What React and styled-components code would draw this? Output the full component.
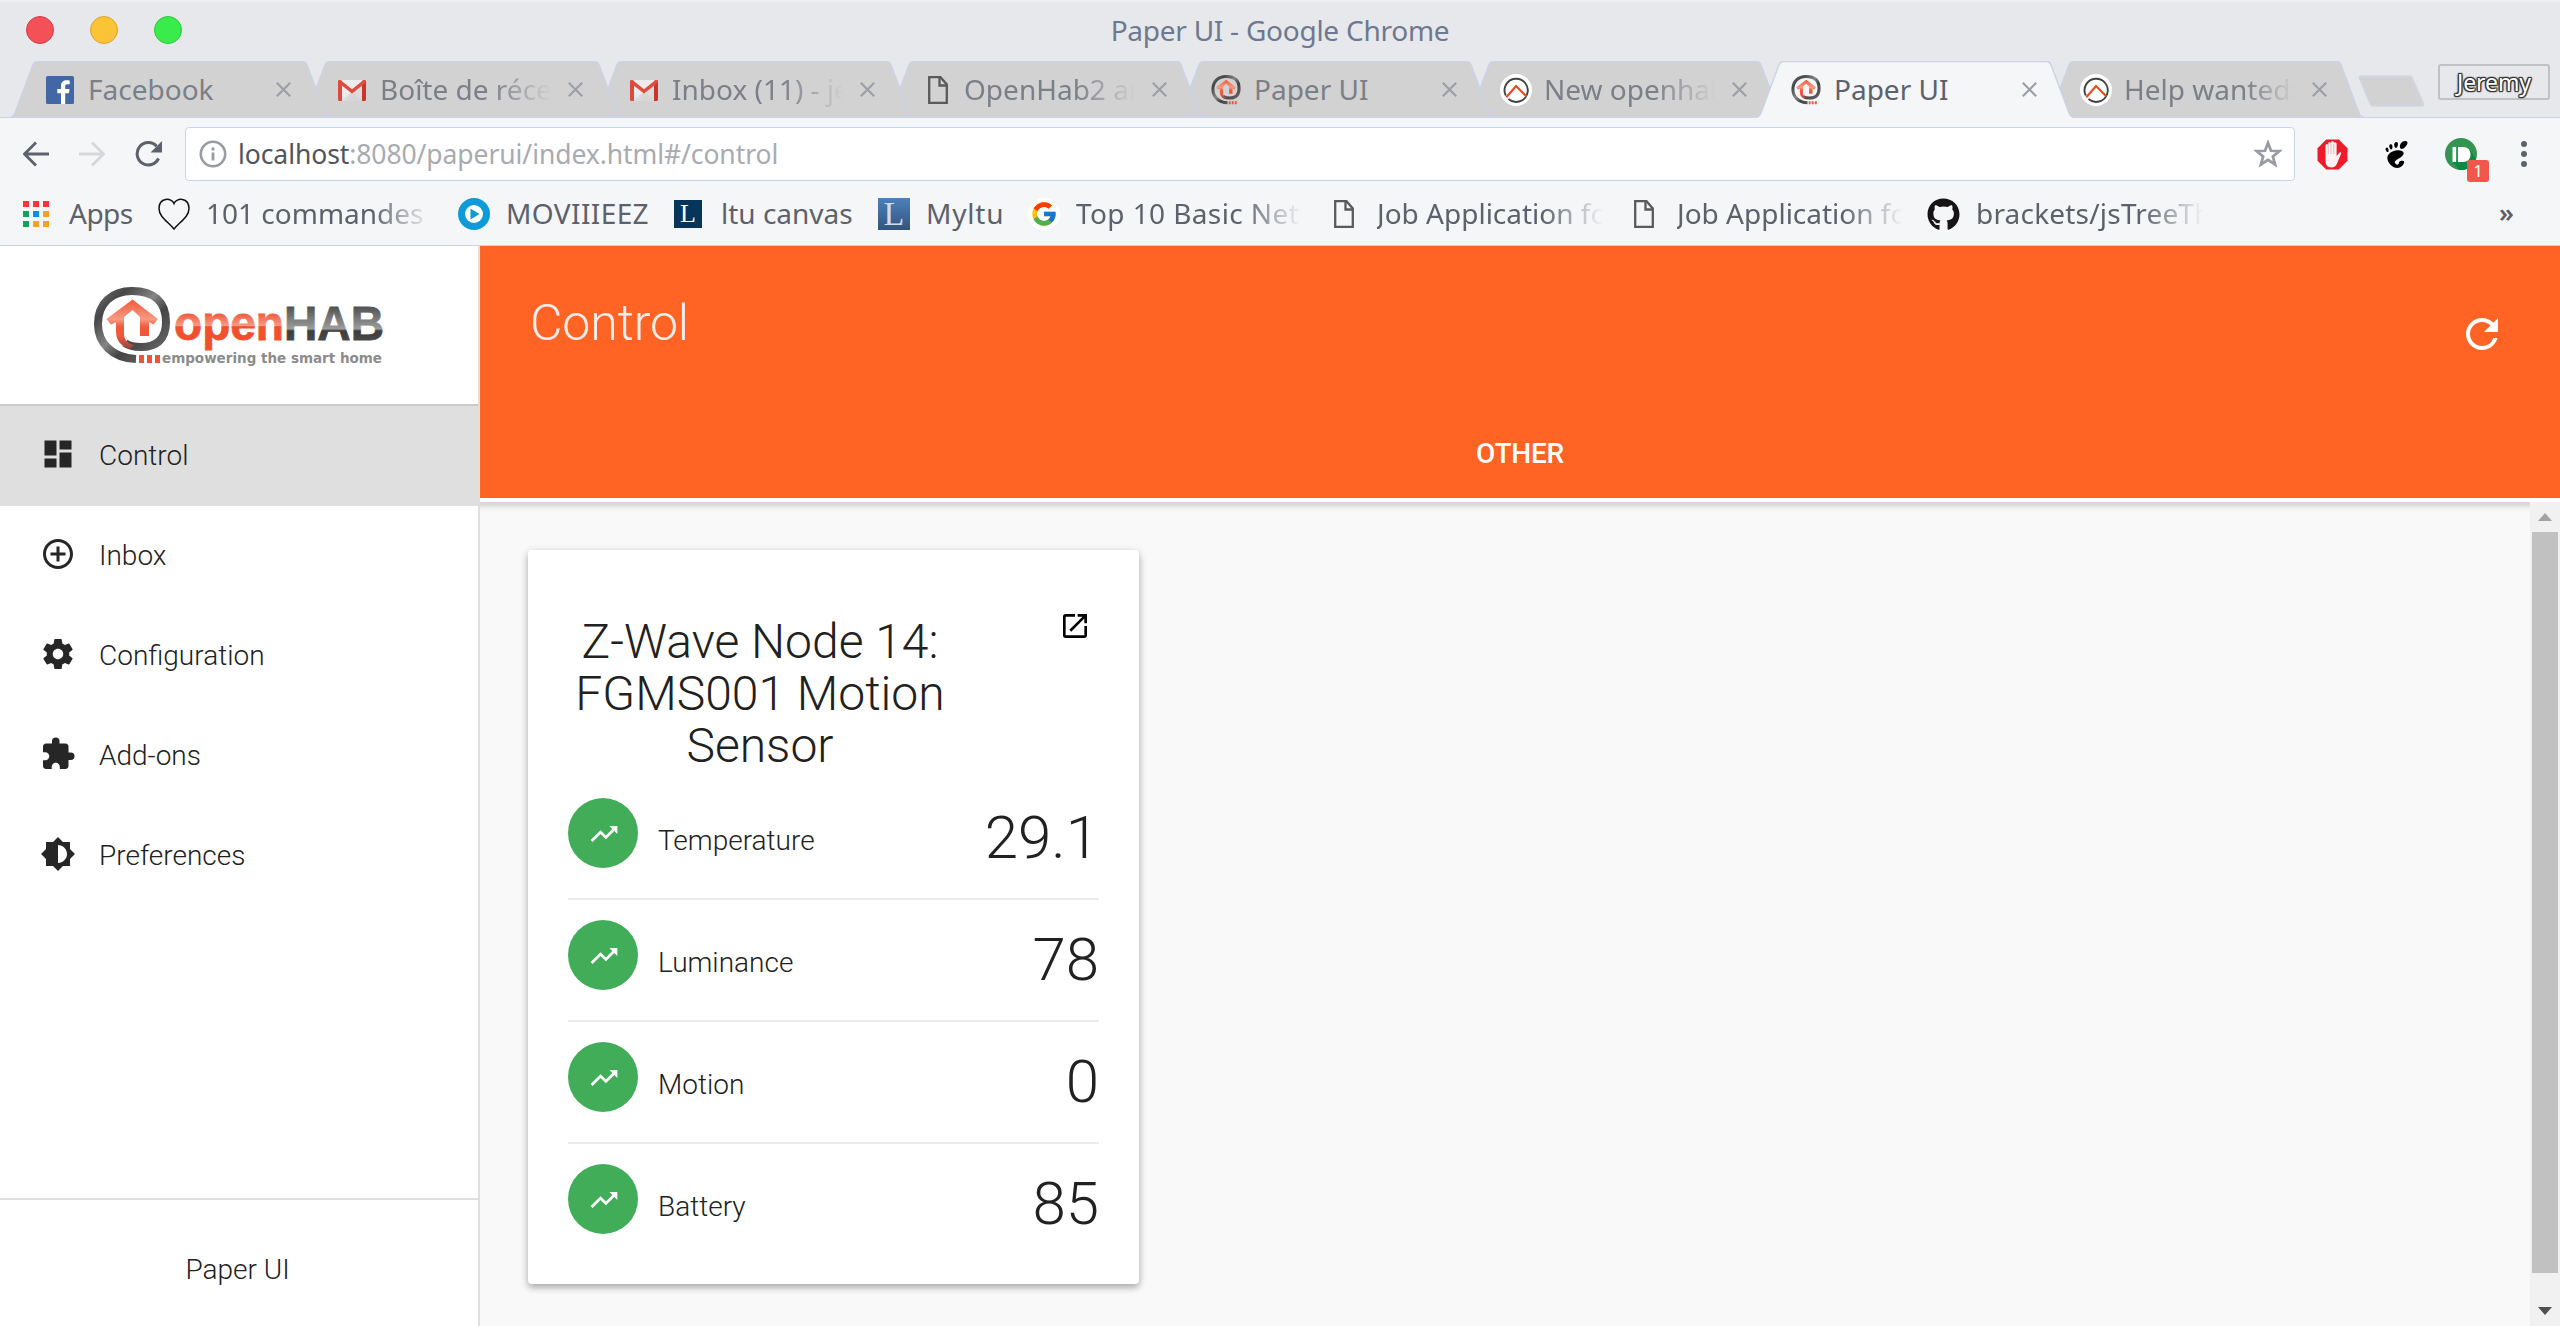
import React from "react";
import styled, { createGlobalStyle, css } from "styled-components";
import {
  MdDashboard,
  MdAddCircleOutline,
  MdExtension,
  MdBrightness6,
  MdTrendingUp,
  MdOpenInNew,
  MdRefresh,
} from "react-icons/md";
import { FaGithub } from "react-icons/fa";
import { FcGoogle } from "react-icons/fc";
import { SiGnome } from "react-icons/si";

const chromeFont = `"Noto Sans", "Open Sans", sans-serif`;
const line = "#cbd3e6";

const GlobalStyle = createGlobalStyle`
  * { box-sizing: border-box; }
  body { margin: 0; background: #fff; }
  svg { display: block; flex: none; }
`;

/* ---------- window ---------- */

const Window = styled.div`
  display: flex;
  flex-direction: column;
  width: 2560px;
  height: 1326px;
  overflow: hidden;
  background: #f5f6f8;
  font-family: ${chromeFont};
  font-size: 28px;
  color: #5c616c;
`;

const TitleBar = styled.header`
  display: grid;
  grid-template-columns: 1fr auto 1fr;
  align-items: center;
  height: 61px;
  padding: 0 26px 3px;
  border-top: 2px solid #eeeff1;
  background: #e7e8eb;
`;

const Lights = styled.div`
  display: flex;
  gap: 36px;
`;

const Light = styled.span`
  width: 28px;
  height: 28px;
  border-radius: 50%;
  border: 1px solid ${(p) => p.$edge};
  background: ${(p) => p.$fill};
`;

const WindowTitle = styled.h1`
  margin: 0 0 1px;
  font-size: 28px;
  font-weight: 400;
  line-height: 38px;
  letter-spacing: -0.25px;
  color: #6e7890;
`;

/* ---------- tabs ---------- */

const TabStrip = styled.nav`
  display: flex;
  align-items: flex-start;
  height: 57px;
  padding: 0 10px;
  background: #e7e8eb;
  box-shadow: inset 0 -1px ${line};
`;

const Tab = styled.div`
  position: relative;
  isolation: isolate;
  z-index: ${(p) => p.$z};
  display: flex;
  flex: none;
  align-items: center;
  width: ${(p) => p.$w}px;
  height: 57px;
  padding-left: 36px;
  color: ${(p) => (p.$active ? "#5c616c" : "#7b7f87")};
  & + & { margin-left: -28px; }
`;

const TabBackdrop = styled.svg`
  position: absolute;
  inset: 0;
  z-index: -1;
`;

const TabIcon = styled.span`
  display: flex;
  flex: none;
  align-items: center;
  justify-content: center;
  width: 28px;
  height: 32px;
  margin-top: 1px;
`;

const fade = css`
  mask-image: linear-gradient(to right, #000 calc(100% - ${(p) => p.$fade}px), transparent);
`;

const TabTitle = styled.span`
  width: 171px;
  margin: 0 17px 1px 14px;
  line-height: 40px;
  overflow: hidden;
  white-space: nowrap;
  ${(p) => p.$fade && fade}
`;

const NewTab = styled.span`
  width: 67px;
  height: 32px;
  margin: 14px 0 0 -6px;
`;

const Profile = styled.span`
  width: 112px;
  height: 36px;
  margin: 3px 0 0 auto;
  border: 2px solid #c0c1c4;
  border-radius: 3px;
  font-size: 23px;
  line-height: 32px;
  letter-spacing: -0.1px;
  text-align: center;
  color: #fff;
  text-shadow: 1px 0 1px #333, -1px 0 1px #333, 0 1px 1px #333, 0 -1px 1px #333,
    1px 1px 1px #333, -1px -1px 1px #333, 1px -1px 1px #333, -1px 1px 1px #333;
`;

/* ---------- toolbar ---------- */

const Toolbar = styled.div`
  display: flex;
  flex: none;
  align-items: center;
  height: 72px;
  padding-left: 23px;
`;

const NavButtons = styled.div`
  display: flex;
  gap: 30px;
  margin-right: 22px;
`;

const Omnibox = styled.div`
  display: flex;
  align-items: center;
  width: 2110px;
  height: 54px;
  padding: 0 12px 0 13px;
  border: 1px solid ${line};
  border-radius: 4px;
  background: #fff;
`;

const Url = styled.span`
  flex: 1;
  margin: 0 0 1px 11px;
  font-size: 26.5px;
  line-height: 38px;
  letter-spacing: -0.08px;
  color: #a8abb2;
`;

const Host = styled.span`
  color: #50545e;
`;

const Extensions = styled.div`
  display: flex;
  align-items: center;
  gap: 35px;
  margin-left: 22px;
`;

const BadgedIcon = styled.span`
  position: relative;
  margin-right: 9px;
`;

const Badge = styled.span`
  position: absolute;
  left: 22px;
  top: 22px;
  width: 22px;
  height: 22px;
  border-radius: 3px;
  background: #f1574b;
  font-size: 17px;
  line-height: 22px;
  text-align: center;
  color: #fff;
`;

/* ---------- bookmarks ---------- */

const BookmarkBar = styled.div`
  display: flex;
  flex: none;
  align-items: center;
  height: 56px;
  padding: 0 46px 7px 23px;
  border-bottom: 1px solid #cdd3dd;
`;

const Bookmark = styled.div`
  display: flex;
  align-items: center;
  gap: ${(p) => p.$gap}px;
  margin-left: ${(p) => p.$before}px;
`;

const BookmarkLabel = styled.span`
  width: ${(p) => p.$w}px;
  margin-bottom: 2px;
  line-height: 40px;
  letter-spacing: ${(p) => p.$track || 0}px;
  overflow: hidden;
  white-space: nowrap;
  ${(p) => p.$fade && fade}
`;

const More = styled.span`
  margin: 0 0 4px auto;
  font-size: 26px;
  font-weight: 600;
`;

/* ---------- page ---------- */

const Page = styled.div`
  display: flex;
  flex: 1;
  min-height: 0;
  font-family: Roboto, sans-serif;
  font-weight: 300;
  color: #212121;
`;

const Sidebar = styled.aside`
  display: flex;
  flex: none;
  flex-direction: column;
  width: 480px;
  border-right: 2px solid #dfdfdf;
  background: #fff;
`;

const LogoArea = styled.div`
  display: flex;
  align-items: center;
  justify-content: center;
  height: 160px;
  padding-top: 7px;
  border-bottom: 2px solid #cbcbcb;
`;

const Menu = styled.nav`
  flex: 1;
`;

const MenuItem = styled.div`
  display: flex;
  align-items: center;
  gap: 23px;
  height: 100px;
  padding: 0 0 2px 40px;
  background: ${(p) => (p.$active ? "#dfdfdf" : "transparent")};
  svg {
    margin-bottom: 2px;
    color: #262626;
  }
`;

const SidebarFooter = styled.footer`
  display: flex;
  align-items: center;
  justify-content: center;
  height: 128px;
  padding: 12px 3px 0 0;
  border-top: 2px solid #dfdfdf;
`;

const Main = styled.main`
  display: flex;
  flex: 1;
  flex-direction: column;
  min-width: 0;
`;

const Header = styled.div`
  flex: none;
  height: 256px;
  border-bottom: 4px solid #fff;
  background: #ff6424;
  color: #fff;
`;

const HeaderTop = styled.div`
  display: flex;
  justify-content: space-between;
  align-items: center;
  height: 163px;
  padding: 0 54px 0 50px;
`;

const PageTitle = styled.h2`
  margin: 0 0 10px;
  font-size: 50px;
  font-weight: 300;
  line-height: 60px;
  letter-spacing: -0.1px;
  color: #f3eeec;
`;

const RefreshButton = styled.span`
  margin-top: 13px;
`;

const HeaderTabs = styled.div`
  display: flex;
  justify-content: center;
  padding-top: 28px;
  font-weight: 500;
  line-height: 34px;
  letter-spacing: -0.2px;
`;

const Body = styled.div`
  display: flex;
  flex: 1;
  min-height: 0;
`;

const Content = styled.section`
  flex: 1;
  padding: 48px;
  background: linear-gradient(#d6d6d6, #dcdcdc 3px, #efefef 6px, #f9f9f9 10px);
`;

const Card = styled.article`
  display: flex;
  flex-direction: column;
  width: 611px;
  height: 734px;
  padding: 60px 40px 0;
  border-radius: 4px;
  background: #fff;
  box-shadow: 0 2px 10px rgba(0, 0, 0, 0.16), 0 4px 6px rgba(0, 0, 0, 0.2);
`;

const CardHeader = styled.div`
  display: flex;
  justify-content: space-between;
  height: 168px;
  padding-right: 8px;
  color: #000;
`;

const CardTitle = styled.h3`
  width: 384px;
  margin: 6px 0 0;
  font-size: 48px;
  font-weight: 300;
  line-height: 52px;
  text-align: center;
  color: #212121;
`;

const Channel = styled.div`
  display: flex;
  align-items: center;
  height: 122px;
  padding: 20px 0 30px;
  border-bottom: 2px solid #ebebeb;
  &:last-child { border-color: transparent; }
`;

const ChannelIcon = styled.span`
  display: flex;
  align-items: center;
  justify-content: center;
  width: 70px;
  height: 70px;
  padding: 2px 0 0 2px;
  border-radius: 50%;
  background: #41ad59;
  color: #fff;
`;

const ChannelName = styled.span`
  flex: 1;
  margin: 15px 0 0 20px;
  line-height: 34px;
`;

const ChannelValue = styled.span`
  margin-top: 9px;
  font-size: 60px;
  line-height: 60px;
`;

const Scrollbar = styled.div`
  display: flex;
  flex-direction: column;
  align-items: center;
  width: 30px;
  background: #f1f1f1;
`;

const Arrow = styled.span`
  width: 0;
  height: 0;
  border: 7px solid transparent;
  ${(p) =>
    p.$down
      ? "margin: 34px 0 11px; border-width: 8px 7px 0; border-top-color: #505050;"
      : "margin: 11px 0; border-width: 0 7px 8px; border-bottom-color: #a3a3a3;"}
`;

const Thumb = styled.span`
  flex: 1;
  width: 26px;
  background: #c1c1c1;
`;

/* ---------- drawings ---------- */

function MarkShapes({ id }) {
  return (
    <>
      <defs>
        <linearGradient id={`${id}-ring`} x1="0" y1="0" x2="1" y2="1">
          <stop offset="0" stopColor="#6a6a6a" />
          <stop offset="0.2" stopColor="#474747" />
          <stop offset="0.45" stopColor="#858585" />
          <stop offset="0.62" stopColor="#444" />
          <stop offset="1" stopColor="#707070" />
        </linearGradient>
        <linearGradient id={`${id}-house`} x1="0" y1="0" x2="0" y2="1">
          <stop offset="0" stopColor="#f2593a" />
          <stop offset="0.4" stopColor="#f79a82" />
          <stop offset="0.55" stopColor="#f2593a" />
          <stop offset="0.75" stopColor="#f0563a" />
          <stop offset="1" stopColor="#8a4a40" />
        </linearGradient>
      </defs>
      <path
        d="M42 72C18 71 4 56 4 37C4 16 18 4 38 4C60 4 72 15 72 35C72 53 62 60 47 60C39 60 35 59 31 56"
        fill="none"
        stroke={`url(#${id}-ring)`}
        strokeWidth="8"
      />
      <path
        d="M38.500 12.500L64 32L59.500 37.500L55 35V49H46V30L38.500 23L30 30V46C30 53 33 56 40 58L36 62C26 59 22 53 22 44V35L17 37.500L12.500 32Z"
        fill={`url(#${id}-house)`}
      />
      <path d="M45 68h5v8h-5zM53 68h5v8h-5zM61 68h5v8h-5z" fill="#ee5436" />
    </>
  );
}

const OpenHabMark = ({ id }) => (
  <svg width="30" height="32" viewBox="-1 -1 78 80">
    <MarkShapes id={id} />
  </svg>
);

const LogoWord = styled.text`
  font: 700 48px "Liberation Sans", Arial, sans-serif;
  stroke-width: 0.8px;
`;
const LogoTagline = styled.text`
  font: 700 14.5px "DejaVu Sans", Verdana, sans-serif;
`;

const OpenHabLogo = () => (
  <svg width="290" height="84" viewBox="0 0 290 84">
    <defs>
      <linearGradient id="open-fill" gradientUnits="userSpaceOnUse" x1="0" y1="26" x2="0" y2="64">
        <stop offset="0" stopColor="#f2573a" />
        <stop offset="0.33" stopColor="#f89a84" />
        <stop offset="0.36" stopColor="#f1502f" />
        <stop offset="1" stopColor="#f1502f" />
      </linearGradient>
      <linearGradient id="hab-fill" gradientUnits="userSpaceOnUse" x1="0" y1="18" x2="0" y2="54">
        <stop offset="0" stopColor="#4c4c4c" />
        <stop offset="0.66" stopColor="#9c9c9c" />
        <stop offset="0.72" stopColor="#3c3c3c" />
        <stop offset="1" stopColor="#4a4a4a" />
      </linearGradient>
    </defs>
    <MarkShapes id="logo" />
    <LogoWord x="80" y="53" textLength="110" lengthAdjust="spacingAndGlyphs" fill="url(#open-fill)" stroke="url(#open-fill)">
      open
    </LogoWord>
    <LogoWord x="190" y="53" textLength="100" lengthAdjust="spacingAndGlyphs" fill="url(#hab-fill)" stroke="url(#hab-fill)">
      HAB
    </LogoWord>
    <LogoTagline x="68" y="76" textLength="220" lengthAdjust="spacingAndGlyphs" fill="#8c8c8c">
      empowering the smart home
    </LogoTagline>
  </svg>
);

const Facebook = () => (
  <svg width="28" height="28" viewBox="0 0 28 28">
    <rect width="28" height="28" rx="1.500" fill="#4267a5" />
    <path
      d="M15 28V17.300H11.300V13.100H15V9.800C15 6 17.300 4.200 20.600 4.200C22 4.200 23.300 4.300 23.700 4.400V8.200H21.400C19.500 8.200 19.200 9.100 19.200 10.400V13.100H23.500L22.900 17.300H19.200V28Z"
      fill="#fff"
    />
  </svg>
);

const Gmail = () => (
  <svg width="28" height="21" viewBox="0 0 28 21">
    <rect x="1" width="26" height="21" rx="1" fill="#ececec" />
    <path d="M3 21L14 11L25 21Z" fill="#dcdcdc" />
    <path d="M14 12L24 5V21H9Z" fill="#d2d2d2" opacity="0.6" />
    <path d="M0 2C0 .6.8 0 2 0L4 1V21H1.500C.6 21 0 20.400 0 19.500Z" fill="#dd4b3e" />
    <path d="M28 2C28 .6 27.200 0 26 0L24 1V21H26.500C27.400 21 28 20.400 28 19.500Z" fill="#c8372d" />
    <path d="M0 2.500C0 0 2 -.5 3.400 .8L14 9.300L24.600 .8C26 -.5 28 0 28 2.500L14 13.500Z" fill="#e04a3f" />
  </svg>
);

const PageIcon = ({ shift = 0 }) => (
  <svg width="20" height="28" viewBox="0 0 20 28" transform={`translate(${shift} 0)`}>
    <path d="M1.200 1.200H12.500L18.800 8.500V26.800H1.200Z" fill="none" stroke="#5a5a5a" strokeWidth="2.300" />
    <path d="M11.500 1.200V9.500H19" fill="none" stroke="#5a5a5a" strokeWidth="2.300" />
  </svg>
);

const Community = () => (
  <svg width="32" height="32" viewBox="0 0 32 32">
    <circle cx="16" cy="16" r="16" fill="#fff" />
    <path d="M5.800 21.500A11.600 11.600 0 1 1 8.500 25" fill="none" stroke="#424242" strokeWidth="1.900" />
    <path d="M6.300 23.300L16 12L26.500 22.500" fill="none" stroke="#ee4a20" strokeWidth="2.200" />
  </svg>
);

const Close = () => (
  <svg width="15" height="15" viewBox="0 0 15 15" stroke="#9b9fa8" strokeWidth="2.200">
    <path d="M.8 .8L14.200 14.200M14.200 .8L.8 14.200" />
  </svg>
);

function TabShape({ width: w, active }) {
  return (
    <TabBackdrop width={w} height="57">
      <path
        d={`M0 57Q3.500 56 5 52L22.500 5Q24 .5 28 .5H${w - 28}Q${w - 24} .5 ${w - 22.500} 5L${w - 5} 52Q${w - 3.500} 56 ${w} 57Z`}
        fill={active ? "#f5f6f8" : "#d2d2d2"}
      />
      <path
        d={`M0 56.500Q3.500 56 5 52L22.500 5Q24 .5 28 .5H${w - 28}Q${w - 24} .5 ${w - 22.500} 5L${w - 5} 52Q${w - 3.500} 56 ${w} 56.500${active ? "" : "Z"}`}
        fill="none"
        stroke={line}
        strokeWidth="1.500"
      />
    </TabBackdrop>
  );
}

const NewTabShape = () => (
  <svg width="67" height="32" viewBox="0 0 67 32">
    <path
      d="M3 1H51Q53.500 1 54.500 3.500L65.500 28.500Q66.500 31 63.500 31H16Q13 31 12 28.500L1.500 3.500Q.5 1 3 1Z"
      fill="#d2d2d2"
      stroke="#cfd7e6"
      strokeWidth="1.500"
    />
  </svg>
);

const ArrowIcon = ({ color, flip }) => (
  <svg width="26" height="26" viewBox="0 0 26 26" fill="none" stroke={color} strokeWidth="2.800">
    <path d={flip ? "M0 13H24M13 1.500L24.500 13L13 24.500" : "M26 13H2M13 1.500L1.500 13L13 24.500"} />
  </svg>
);

const ReloadIcon = () => (
  <svg width="28" height="26" viewBox="0 0 28 26">
    <path d="M21.600 5.200A11.200 11.200 0 1 0 23.500 17.500" fill="none" stroke="#5c616c" strokeWidth="3" />
    <path d="M27 0V11.500H15.500Z" fill="#5c616c" />
  </svg>
);

const InfoIcon = () => (
  <svg width="28" height="28" viewBox="0 0 28 28">
    <circle cx="14" cy="14" r="12.200" fill="none" stroke="#979ba4" strokeWidth="2.600" />
    <path d="M12.600 7.500h2.800v3h-2.800zM12.600 12.500h2.800v8h-2.800z" fill="#979ba4" />
  </svg>
);

const StarIcon = () => (
  <svg width="28" height="28" viewBox="0 0 28 28">
    <path
      d="M14 3.500L16.700 10.700L24.400 11L18.400 15.800L20.500 23.200L14 19L7.500 23.200L9.600 15.800L3.600 11L11.300 10.700Z"
      fill="none"
      stroke="#979ba4"
      strokeWidth="2.500"
      transform="translate(-1.400 -1) scale(1.100)"
    />
  </svg>
);

const AdBlockIcon = () => (
  <svg width="31" height="31" viewBox="0 0 31 31">
    <path d="M9.200 .5H21.800L30.500 9.200V21.800L21.800 30.500H9.200L.5 21.800V9.200Z" fill="#ee1c2b" />
    <path
      d="M8.500 12.500V6.500Q8.500 5 9.800 5T11.200 6.500V4.500Q11.200 3 12.600 3T14 4.500V3.500Q14 2 15.400 2T16.800 3.500V4.500Q16.800 3.200 18.200 3.200T19.600 4.800V17L22.500 13.500Q24.200 12.500 24.300 14.300L20 24.500Q18.500 28.500 14.500 28.500Q8.500 28.500 8.500 21.500Z"
      fill="#fbf3f3"
    />
    <path d="M11.200 6V15M14 5V15M16.800 5V15" stroke="#d9a9ab" strokeWidth=".7" />
  </svg>
);

const PushbulletIcon = () => (
  <svg width="32" height="32" viewBox="0 0 32 32">
    <circle cx="16" cy="16" r="16" fill="#349451" />
    <path d="M13 22L25 12L31 21A16 16 0 0 1 14 32L8 24Z" fill="#0b8a46" />
    <path d="M7.500 9h3.600v15H7.500zM13 9h5c5 0 7.500 3 7.500 7.500S23 24 18 24h-5z" fill="#fff" />
  </svg>
);

const DotsIcon = () => (
  <svg width="6" height="28" viewBox="0 0 6 28" fill="#5c616c">
    <circle cx="3" cy="4" r="3" />
    <circle cx="3" cy="14" r="3" />
    <circle cx="3" cy="24" r="3" />
  </svg>
);

const AppsIcon = () => (
  <svg width="26" height="26" viewBox="0 0 26 26">
    <path d="M0 0h6v6H0zM10 0h6v6h-6zM20 0h6v6h-6z" fill="#ff3239" />
    <path d="M0 10h6v6H0zM0 20h6v6H0z" fill="#189f5b" />
    <path d="M10 10h6v6h-6z" fill="#0a8df5" />
    <path d="M20 10h6v6h-6zM10 20h6v6h-6zM20 20h6v6h-6z" fill="#fba025" />
  </svg>
);

const HeartIcon = () => (
  <svg width="32" height="32" viewBox="0 0 32 32">
    <path
      d="M16 5.500C13.500 -.8 1 -.6 1 10.500C1 19 10.500 24 16 31C21.500 24 31 19 31 10.500C31 -.6 18.500 -.8 16 5.500Z"
      fill="none"
      stroke="#111"
      strokeWidth="1.500"
    />
  </svg>
);

const PlayIcon = () => (
  <svg width="32" height="32" viewBox="0 0 32 32">
    <circle cx="16" cy="16" r="16" fill="#0c9ad8" />
    <circle cx="16" cy="16" r="9" fill="#fff" />
    <path d="M12.500 10.500L21.500 16L12.500 21.500Z" fill="#0c9ad8" />
  </svg>
);

const LetterTile = styled.span`
  width: ${(p) => p.$size}px;
  height: ${(p) => p.$size}px;
  background: ${(p) => p.$fill};
  font: ${(p) => p.$font}px/${(p) => p.$size}px "Liberation Serif", serif;
  text-align: center;
  color: ${(p) => p.$ink};
`;

const GoogleTile = styled.span`
  display: flex;
  align-items: center;
  justify-content: center;
  width: 32px;
  height: 32px;
  border-radius: 50%;
  background: #fff;
`;

const GearIcon = () => (
  <svg width="36" height="36" viewBox="0 0 24 24" fill="currentColor">
    <path d="M19.430 12.980c.04-.32.07-.64.07-.98s-.03-.66-.07-.98l2.110-1.650c.19-.15.24-.42.12-.64l-2-3.460c-.12-.22-.39-.3-.61-.22l-2.490 1c-.52-.4-1.080-.73-1.690-.98l-.38-2.650C14.460 2.180 14.250 2 14 2h-4c-.25 0-.46.18-.49.42l-.38 2.650c-.61.25-1.170.59-1.690.98l-2.490-1c-.23-.09-.49 0-.61.22l-2 3.460c-.13.22-.07.49.12.64l2.110 1.650c-.04.32-.07.65-.07.98s.03.66.07.98l-2.110 1.650c-.19.15-.24.42-.12.64l2 3.460c.12.22.39.3.61.22l2.490-1c.52.4 1.080.73 1.690.98l.38 2.650c.03.24.24.42.49.42h4c.25 0 .46-.18.49-.42l.38-2.650c.61-.25 1.170-.59 1.690-.98l2.490 1c.23.09.49 0 .61-.22l2-3.460c.12-.22.07-.49-.12-.64l-2.110-1.650zM12 15.500c-1.930 0-3.500-1.570-3.500-3.500s1.570-3.500 3.500-3.500 3.500 1.570 3.500 3.500-1.570 3.500-3.500 3.500z" />
  </svg>
);

/* ---------- data ---------- */

const tabs = [
  { icon: <Facebook />, title: "Facebook", w: 320 },
  { icon: <Gmail />, title: "Boîte de réception", w: 320, fade: 60 },
  { icon: <Gmail />, title: "Inbox (11) - jeremy", w: 320, fade: 60 },
  { icon: <PageIcon shift={2} />, title: "OpenHab2 and", w: 318, fade: 60 },
  { icon: <OpenHabMark id="tab-a" />, title: "Paper UI", w: 318 },
  { icon: <Community />, title: "New openhab", w: 318, fade: 60 },
  { icon: <OpenHabMark id="tab-b" />, title: "Paper UI", w: 318, active: true },
  { icon: <Community />, title: "Help wanted:", w: 318, fade: 50 },
];

const bookmarks = [
  { icon: <AppsIcon />, label: "Apps", before: 0, gap: 20, w: 66, track: -0.5 },
  { icon: <HeartIcon />, label: "101 commandes i", before: 23, gap: 16, w: 226, fade: 60 },
  { icon: <PlayIcon />, label: "MOVIIIEEZ", before: 26, gap: 16, w: 145, track: 0.4 },
  {
    icon: <LetterTile $size={28} $font={26} $fill="#06355a" $ink="#fff">L</LetterTile>,
    label: "ltu canvas", before: 23, gap: 19, w: 132,
  },
  {
    icon: (
      <LetterTile $size={32} $font={34} $fill="linear-gradient(#4c81bb, #34547c)" $ink="#cfdcec">L</LetterTile>
    ),
    label: "Myltu", before: 25, gap: 16, w: 79, track: 0.8,
  },
  {
    icon: <GoogleTile><FcGoogle size={28} /></GoogleTile>,
    label: "Top 10 Basic Netw", before: 23, gap: 16, w: 226, fade: 60, track: 0.4,
  },
  { icon: <PageIcon />, label: "Job Application for", before: 32, gap: 23, w: 226, fade: 60 },
  { icon: <PageIcon />, label: "Job Application for", before: 31, gap: 23, w: 226, fade: 60 },
  { icon: <FaGithub size={33} color="#161414" />, label: "brackets/jsTreeTheme", before: 24, gap: 16, w: 227, fade: 60, track: 0.2 },
];

const menu = [
  { icon: <MdDashboard size={36} />, label: "Control", active: true },
  { icon: <MdAddCircleOutline size={36} />, label: "Inbox" },
  { icon: <GearIcon />, label: "Configuration" },
  { icon: <MdExtension size={36} />, label: "Add-ons" },
  { icon: <MdBrightness6 size={36} />, label: "Preferences" },
];

const channels = [
  ["Temperature", "29.1"],
  ["Luminance", "78"],
  ["Motion", "0"],
  ["Battery", "85"],
];

export default function App() {
  return (
    <Window>
      <GlobalStyle />
      <TitleBar>
        <Lights>
          <Light $fill="#f45058" $edge="#d83a48" />
          <Light $fill="#fbc436" $edge="#dca52c" />
          <Light $fill="#3aec4b" $edge="#28c93a" />
        </Lights>
        <WindowTitle>Paper UI - Google Chrome</WindowTitle>
      </TitleBar>

      <TabStrip>
        {tabs.map((t, i) => (
          <Tab key={i} $w={t.w} $active={t.active} $z={t.active ? 20 : 10 - i}>
            <TabShape width={t.w} active={t.active} />
            <TabIcon>{t.icon}</TabIcon>
            <TabTitle $fade={t.fade}>{t.title}</TabTitle>
            <Close />
          </Tab>
        ))}
        <NewTab><NewTabShape /></NewTab>
        <Profile>Jeremy</Profile>
      </TabStrip>

      <Toolbar>
        <NavButtons>
          <ArrowIcon color="#5c616c" />
          <ArrowIcon color="#d5d7da" flip />
          <ReloadIcon />
        </NavButtons>
        <Omnibox>
          <InfoIcon />
          <Url><Host>localhost</Host>:8080/paperui/index.html#/control</Url>
          <StarIcon />
        </Omnibox>
        <Extensions>
          <AdBlockIcon />
          <SiGnome size={27} color="#000" />
          <BadgedIcon>
            <PushbulletIcon />
            <Badge>1</Badge>
          </BadgedIcon>
          <DotsIcon />
        </Extensions>
      </Toolbar>

      <BookmarkBar>
        {bookmarks.map((b, i) => (
          <Bookmark key={i} $gap={b.gap} $before={b.before}>
            {b.icon}
            <BookmarkLabel $w={b.w} $fade={b.fade} $track={b.track}>{b.label}</BookmarkLabel>
          </Bookmark>
        ))}
        <More>»</More>
      </BookmarkBar>

      <Page>
        <Sidebar>
          <LogoArea><OpenHabLogo /></LogoArea>
          <Menu>
            {menu.map((m) => (
              <MenuItem key={m.label} $active={m.active}>
                {m.icon}
                {m.label}
              </MenuItem>
            ))}
          </Menu>
          <SidebarFooter>Paper UI</SidebarFooter>
        </Sidebar>

        <Main>
          <Header>
            <HeaderTop>
              <PageTitle>Control</PageTitle>
              <RefreshButton><MdRefresh size={48} /></RefreshButton>
            </HeaderTop>
            <HeaderTabs>OTHER</HeaderTabs>
          </Header>
          <Body>
            <Content>
              <Card>
                <CardHeader>
                  <CardTitle>Z-Wave Node 14: FGMS001 Motion Sensor</CardTitle>
                  <MdOpenInNew size={32} />
                </CardHeader>
                <div>
                  {channels.map(([name, value]) => (
                    <Channel key={name}>
                      <ChannelIcon><MdTrendingUp size={32} /></ChannelIcon>
                      <ChannelName>{name}</ChannelName>
                      <ChannelValue>{value}</ChannelValue>
                    </Channel>
                  ))}
                </div>
              </Card>
            </Content>
            <Scrollbar>
              <Arrow />
              <Thumb />
              <Arrow $down />
            </Scrollbar>
          </Body>
        </Main>
      </Page>
    </Window>
  );
}
